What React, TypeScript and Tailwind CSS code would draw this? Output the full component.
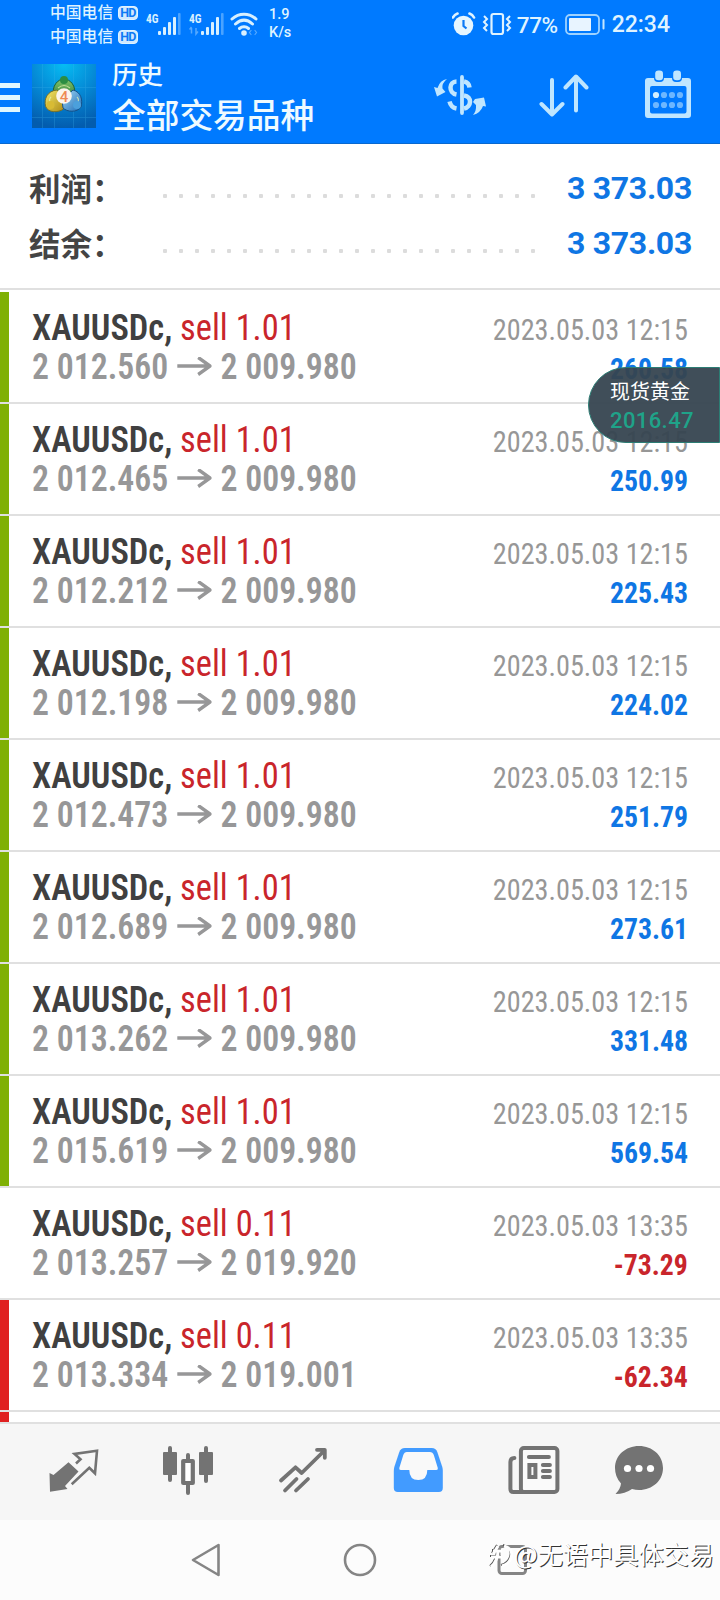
import type { ReactNode } from "react";

type Deal = {
  volume: string;
  open: string;
  close: string;
  time: string;
  profit: string;
  mark: "green" | "red" | "none";
};

const deals: Deal[] = [
  { volume: "1.01", open: "2 012.560", close: "2 009.980", time: "2023.05.03 12:15", profit: "260.58", mark: "green" },
  { volume: "1.01", open: "2 012.465", close: "2 009.980", time: "2023.05.03 12:15", profit: "250.99", mark: "green" },
  { volume: "1.01", open: "2 012.212", close: "2 009.980", time: "2023.05.03 12:15", profit: "225.43", mark: "green" },
  { volume: "1.01", open: "2 012.198", close: "2 009.980", time: "2023.05.03 12:15", profit: "224.02", mark: "green" },
  { volume: "1.01", open: "2 012.473", close: "2 009.980", time: "2023.05.03 12:15", profit: "251.79", mark: "green" },
  { volume: "1.01", open: "2 012.689", close: "2 009.980", time: "2023.05.03 12:15", profit: "273.61", mark: "green" },
  { volume: "1.01", open: "2 013.262", close: "2 009.980", time: "2023.05.03 12:15", profit: "331.48", mark: "green" },
  { volume: "1.01", open: "2 015.619", close: "2 009.980", time: "2023.05.03 12:15", profit: "569.54", mark: "green" },
  { volume: "0.11", open: "2 013.257", close: "2 019.920", time: "2023.05.03 13:35", profit: "-73.29", mark: "none" },
  { volume: "0.11", open: "2 013.334", close: "2 019.001", time: "2023.05.03 13:35", profit: "-62.34", mark: "red" },
];

const markColor = { green: "bg-[#7fb004]", red: "bg-[#e02020]", none: "bg-white" };

function SignalBars({ arrows }: { arrows?: boolean }) {
  return (
    <svg className="h-[26px] w-[37px]" viewBox="0 0 37 26" fill="#d8f0ff">
      <text x="0" y="13" fontSize="13" fontWeight="700" fontFamily="Roboto Condensed, Roboto, sans-serif" textLength="12.5" lengthAdjust="spacingAndGlyphs">4G</text>
      <rect x="12" y="21" width="3" height="4" rx="1" />
      <rect x="17" y="17" width="3" height="8" rx="1" />
      <rect x="22" y="12" width="3" height="13" rx="1" />
      <rect x="27" y="7" width="3" height="18" rx="1" />
      <rect x="32" y="3" width="2.6" height="22" rx="1" opacity="0.35" />
      {arrows && <path d="M2.5 18v5.5M2.5 17l-2 2.5M7 18v6l2-2.5" stroke="#d8f0ff" strokeWidth="1.5" fill="none" opacity="0.4" />}
    </svg>
  );
}

function StatusBar() {
  return (
    <div className="flex h-12 items-start text-[#dff3ff]">
      <div className="flex w-[95px] flex-col pl-[50px] font-['Noto_Sans_CJK_SC',sans-serif] text-[15.8px] leading-6 font-medium text-nowrap">
        <span>中国电信</span>
        <span>中国电信</span>
      </div>
      <div className="ml-[23px] flex flex-col gap-[10px] pt-[6px]">
        {[0, 1].map((i) => (
          <span key={i} className="flex h-[14px] w-[20px] items-center justify-center rounded-[4px] border border-[#dff3ff] bg-[#cfe8ff] font-['Roboto',sans-serif] text-[12.500px] leading-[12px] font-bold tracking-[-0.6px] text-[#0d7af5]">HD</span>
        ))}
      </div>
      <div className="ml-[8px] flex gap-[6px] pt-[10px]">
        <SignalBars />
        <SignalBars arrows />
      </div>
      <svg className="mt-[11px] ml-[4px] h-[26px] w-[28px]" viewBox="0 0 28 26" fill="none" stroke="#d8f0ff" strokeWidth="3" strokeLinecap="round">
        <path d="M2 8C9 1.500 19 1.500 26 8M5.500 13C11 8 17 8 22.500 13M9.500 17.500C12 15.300 16 15.300 18.500 17.500" />
        <circle cx="14" cy="22" r="1.300" fill="#d8f0ff" />
        <path d="M21 19.500l-1.500 2 1.500 2M25 19.500l1.500 2-1.500 2" strokeWidth="1.200" opacity="0.4" />
      </svg>
      <div className="ml-[11px] flex flex-col pt-[6px] font-['Roboto',sans-serif] text-[14.5px] leading-[18px] font-medium">
        <span>1.9</span>
        <span>K/s</span>
      </div>
      <svg className="mt-[12px] ml-auto h-[24px] w-[60px]" viewBox="452 12 60 24" fill="none" stroke="#dff3ff">
        <circle cx="463.500" cy="25.500" r="9.800" fill="#e6f6ff" stroke="none" />
        <path d="M463.500 20v6l3 2.500" stroke="#0d7af5" strokeWidth="2.200" />
        <path d="M453 17.500Q454.500 14.500 457.500 13.500M469.500 13.500Q472.500 14.500 474 17.500" strokeWidth="2.600" strokeLinecap="round" />
        <rect x="491.500" y="14" width="11.500" height="20" rx="2" strokeWidth="2.200" />
        <path d="M484 16l3 3-3 3 3 3-3 3 3 3M510 16l-3 3 3 3-3 3 3 3-3 3" strokeWidth="2" />
      </svg>
      <span className="mt-[12px] ml-[5px] w-[43px] font-['Roboto',sans-serif] text-[22.500px] leading-[26px] font-medium tracking-[-0.3px] text-nowrap">77%</span>
      <svg className="mt-[13px] ml-[5px] h-[22px] w-[41px]" viewBox="0 0 41 22">
        <rect x="1" y="2" width="33" height="19" rx="4" fill="none" stroke="#9ed2ff" strokeWidth="1.800" />
        <rect x="4" y="5" width="22" height="13" rx="1" fill="#e8f4ff" />
        <path d="M38.500 7v8.500" stroke="#c4e6ff" strokeWidth="2" strokeLinecap="round" />
      </svg>
      <span className="mt-[12px] mr-[50px] ml-[6px] font-['Roboto',sans-serif] text-[23px] leading-[26px] font-medium">22:34</span>
    </div>
  );
}

function AppLogo() {
  return (
    <svg className="h-16 w-16" viewBox="0 0 64 64">
      <defs>
        <radialGradient id="sky" cx="0.5" cy="0" r="1">
          <stop offset="0" stopColor="#06bdf3" />
          <stop offset="0.5" stopColor="#058ad6" />
          <stop offset="1" stopColor="#035cae" />
        </radialGradient>
        <linearGradient id="leaf" x2="0" y2="1">
          <stop stopColor="#86c66b" />
          <stop offset="1" stopColor="#217434" />
        </linearGradient>
        <linearGradient id="gold" x2="1" y2="1">
          <stop stopColor="#f3e86a" />
          <stop offset="1" stopColor="#ad8a14" />
        </linearGradient>
        <linearGradient id="water" x2="1" y2="1">
          <stop stopColor="#a6dcf5" />
          <stop offset="1" stopColor="#1b6ab8" />
        </linearGradient>
      </defs>
      <rect width="64" height="64" fill="url(#sky)" />
      <path d="M0 23.500h64M0 53.500h64M10.500 0v64M22.500 0v64M41.500 0v64M53.500 0v64" stroke="#42b6ee" strokeWidth="0.700" opacity="0.35" />
      <path d="M22 32C19 22 26 15 32 15s13 7 10 17l-4 4H26Z" fill="url(#leaf)" stroke="#1b5f35" />
      <path d="M25 26C15 27 12 35 13.500 42c2 7 13 7 18 3l1-11Z" fill="url(#gold)" stroke="#75702a" />
      <path d="M41 26c8 2 10 10 8 17-4 6-14 5-18 1l-1-8Z" fill="url(#water)" stroke="#155188" />
      <path d="M26 24q6-5 12 0M19 33q-3 3 0 6M45 33q3 3 0 6" fill="none" stroke="#e6f5b0" strokeWidth="1.200" opacity="0.7" />
      <circle cx="32" cy="16" r="4" fill="#2c8d43" />
      <circle cx="18.500" cy="41" r="4" fill="#d8bb34" />
      <circle cx="45" cy="41" r="4" fill="#4ba0dc" />
      <circle cx="32" cy="32" r="7.800" fill="#fbf4ec" />
      <text x="32" y="37.500" textAnchor="middle" fontSize="15" fontWeight="500" fontFamily="Roboto, sans-serif" fill="#ee8a54">4</text>
    </svg>
  );
}

function Header() {
  return (
    <div className="flex h-24 items-start border-b border-[#0868cf]">
      <div className="flex w-5 flex-col gap-[7px] pt-[35px]">
        <span className="h-[5px] bg-[#dff6ff]" />
        <span className="h-[5px] bg-[#dff6ff]" />
        <span className="h-[5px] bg-[#dff6ff]" />
      </div>
      <div className="mt-4 ml-3">
        <AppLogo />
      </div>
      <div className="ml-[16px] flex flex-col pt-[7px] font-['Noto_Sans_CJK_SC',sans-serif] font-medium text-[#eefaff]">
        <span className="text-[25.500px] leading-[36px]">历史</span>
        <span className="text-[33.700px] leading-[45px]">全部交易品种</span>
      </div>
      <svg className="mt-6 ml-auto h-12 w-[56px]" viewBox="432 72 56 48" fill="none" stroke="#c0e6ff" strokeWidth="3.800">
        <path d="M462 77v36" strokeLinecap="round" />
        <path d="M456.500 81.500C449 81.500 448 93 456.500 94.500M464 81.500Q469 82.500 469.500 87.500M464 95.500C472.500 96.500 471.500 107 464 108.500M449.500 101.500Q451 107.500 456.500 108.500" strokeWidth="4.500" />
        <path d="M447 79q-5.500 4.500-4.500 9.500l3 3.500-8.500 4.500-3-9.500 3.500 1Q440 80 447 79ZM473 115q3.500-4 3-10l-3-3 2-3 9-1.500 2 9-3-.5Q480.500 113 473 115Z" fill="#c0e6ff" stroke="none" />
      </svg>
      <svg className="mt-6 ml-[51px] h-12 w-[52px]" viewBox="539 72 52 48" fill="none" stroke="#bfe6ff" strokeWidth="4" strokeLinecap="round" strokeLinejoin="round">
        <path d="M552 80v34M541.500 104l10.500 10.500 10.500-10.500M576 110.500V77M565.500 87.500L576 76.500l10.500 11" />
      </svg>
      <svg className="mt-5 mr-7 ml-[53px] h-[52px] w-12" viewBox="644 68 48 52">
        <path fillRule="evenodd" d="M648 78h40q3 0 3 3v34q0 3-3 3h-40q-3 0-3-3V81q0-3 3-3Zm4 8q-2 0-2 2v23.500q0 2 2 2h32.500q2 0 2-2V88q0-2-2-2Z" fill="#c0e6ff" />
        <rect x="654" y="70" width="10" height="12" rx="4" fill="#007aff" />
        <rect x="672" y="70" width="10" height="12" rx="4" fill="#007aff" />
        <rect x="655.200" y="70.500" width="7.800" height="9.800" rx="3.300" fill="#c0e6ff" />
        <rect x="673.200" y="70.500" width="7.800" height="9.800" rx="3.300" fill="#c0e6ff" />
        <g fill="#6db7ff">
          <circle cx="656" cy="95" r="3.100" fill="#d4f0ff" />
          <circle cx="664" cy="95" r="3.100" />
          <circle cx="672" cy="95" r="3.100" />
          <circle cx="680" cy="95" r="3.100" />
          <circle cx="656" cy="105" r="3.100" />
          <circle cx="664" cy="105" r="3.100" />
          <circle cx="672" cy="105" r="3.100" />
          <circle cx="680" cy="105" r="3.100" />
        </g>
      </svg>
    </div>
  );
}

function SummaryLine({ label, value }: { label: string; value: string }) {
  return (
    <div className="flex h-[55px] items-center">
      <span className="-mt-[3px] w-[134px] font-['Noto_Sans_CJK_SC',sans-serif] text-[31.500px] leading-[55px] font-bold text-[#444]">{label}</span>
      <div className="mt-[14px] flex gap-3">
        {Array.from({ length: 24 }, (_, i) => (
          <span key={i} className="size-1 rounded-[1px] bg-[#dcdcdc]" />
        ))}
      </div>
      <span className="ml-auto font-['Roboto',sans-serif] text-[32px] leading-[55px] font-bold tracking-[-0.3px] text-[#0f76e4]">{value}</span>
    </div>
  );
}

function DealRow({ deal }: { deal: Deal }) {
  return (
    <div className="flex h-28 border-b-2 border-[#e0e0e0]">
      <div className={`w-[9px] ${markColor[deal.mark]}`} />
      <div className="flex grow justify-between pr-[32px] pl-[23px] font-['Roboto_Condensed','Roboto',sans-serif] text-nowrap">
        <div className="flex flex-col items-start pt-4 text-[37px] leading-[39px]">
          <div className="origin-left scale-x-[0.93] text-[#c9252b]">
            <span className="font-semibold text-[#404040]">XAUUSDc,</span> sell {deal.volume}
          </div>
          <div className="flex origin-left scale-x-[0.913] items-center font-semibold text-[#979798]">
            {deal.open}
            <svg className="mx-[9.500px] h-5 w-[38px]" viewBox="0 0 38 20" fill="none" stroke="#979798" strokeWidth="3.600">
              <path d="M0 9h36M23 .5L36 9 23 17.500" strokeLinejoin="round" />
            </svg>
            {deal.close}
          </div>
        </div>
        <div className="flex flex-col items-end pt-[19px] text-[29.500px] leading-[39px]">
          <span className="origin-right scale-x-[0.957] text-[#979797]">{deal.time}</span>
          <span className={`origin-right scale-x-[0.94] font-bold ${deal.profit.startsWith("-") ? "text-[#c9252b]" : "text-[#0f76e4]"}`}>{deal.profit}</span>
        </div>
      </div>
    </div>
  );
}

function Tab({ box, children }: { box: string; children: ReactNode }) {
  return (
    <svg className="h-14 w-[56px] overflow-visible" viewBox={box} fill="none" stroke="#737373" strokeLinecap="round" strokeLinejoin="round">
      {children}
    </svg>
  );
}

function TabBar() {
  return (
    <div className="flex h-24 items-center justify-between bg-[#f6f6f6] px-[46px] pb-1">
      <Tab box="46 1442 56 56">
        <path d="M49.500 1473l4 2 15-12.700 10 9.200L65 1486l2.500 3-17.500 2.700Z" fill="#737373" stroke="none" />
        <path d="M76 1463.500l4.500-4.200-6-5.300 22.500-3.300-2 22.600-5.700-5.600-17.600 16.600" strokeWidth="2.600" strokeLinejoin="miter" strokeLinecap="butt" />
      </Tab>
      <Tab box="160.500 1442 56 56">
        <path d="M170.500 1448v32M206.500 1448v33M188.500 1455v6M188.500 1484v9" strokeWidth="4" />
        <rect x="163.500" y="1452" width="14" height="23" rx="1" fill="#737373" stroke="none" />
        <rect x="199.500" y="1452" width="14" height="23" rx="1" fill="#737373" stroke="none" />
        <rect x="183.700" y="1461" width="9.600" height="22" strokeWidth="4.200" fill="#fff" />
      </Tab>
      <Tab box="275 1442 56 56">
        <path d="M281 1480.500l14.500-13.200 6.200 5.700 22.800-22.500M317 1449.800h7.800v8M285 1490.500l11.500-11.500M296 1490.500l12-11.500" strokeWidth="3.800" />
      </Tab>
      <Tab box="389.200 1442 56 56">
        <path d="M405 1448h27q4 0 5.500 4l5 15q.5 2 .5 4v17q0 4-4 4h-41q-4 0-4-4v-17q0-2 .5-4l5-15q1.500-4 5.500-4Z" fill="#429bff" stroke="none" />
        <path d="M407 1452h23q3 0 4 3l4 13q.5 2-1.500 2H427.500q0 10-9 10t-9-10H401q-2 0-1.500-2l4-13q1-3 3.500-3Z" fill="#f9f9f9" stroke="none" />
      </Tab>
      <Tab box="503.600 1442 56 56">
        <rect x="520.500" y="1448" width="36.500" height="44" rx="3" strokeWidth="4" fill="#fafafa" />
        <path d="M514 1458q-4 0-4 4v27q0 3 3 3h10M528.500 1457h20M542.500 1465h7M542.500 1471h7M542.500 1477h7" strokeWidth="4" />
        <rect x="529" y="1465" width="6" height="12" strokeWidth="4" strokeLinejoin="miter" />
      </Tab>
      <Tab box="618 1442 56 56">
        <path d="M639 1446c13.500 0 24 9.500 24 22s-10.500 22-24 22q-3.500 0-7-1-7 5-16.500 5 5-5 5.500-10.500-6-6.500-6-15.500c0-12.500 10.500-22 24-22Z" fill="#737373" stroke="none" />
        <g fill="#fff" stroke="none">
          <circle cx="627.500" cy="1468.500" r="3.600" />
          <circle cx="639" cy="1468.500" r="3.600" />
          <circle cx="650.500" cy="1468.500" r="3.600" />
        </g>
      </Tab>
    </div>
  );
}

function SystemNav() {
  return (
    <div className="flex h-20 items-center bg-[#fcfcfc] pl-[188px]">
      <svg className="h-10 w-9" viewBox="188 1540 36 40" fill="none" stroke="#858585" strokeWidth="2.600" strokeLinejoin="round">
        <path d="M193 1560l25.500-15v30Z" />
      </svg>
      <svg className="ml-[118px] h-10 w-9" viewBox="342 1540 36 40" fill="none" stroke="#858585" strokeWidth="2.600">
        <circle cx="360" cy="1560" r="15" />
      </svg>
      <svg className="ml-[116px] h-10 w-9" viewBox="494 1540 36 40" fill="none" stroke="#858585" strokeWidth="3">
        <rect x="499" y="1546.500" width="26.500" height="27" rx="3" />
      </svg>
    </div>
  );
}

function Watermark() {
  return (
    <div className="absolute right-[6px] bottom-[29px] flex items-center text-white">
      <svg className="mt-1 h-7 w-[28px]" viewBox="488 1542 28 28" fill="none">
        <path d="M499 1546l-5 8M494 1551h9M492 1557h11M499 1550q0 11-7 17M505 1546q10 3 7 12-2 6-9 8" stroke="#555" strokeWidth="2" />
        <path d="M500 1547l-5 8M495 1552h9M493 1558h11M500 1551q0 11-7 17M506 1547q10 3 7 12-2 6-9 8" stroke="#fff" strokeWidth="3" />
      </svg>
      <span className="font-['Noto_Sans_CJK_SC',sans-serif] text-[25.200px] leading-[36px] text-nowrap [text-shadow:1px_1px_0_#333]">@无语中具体交易</span>
    </div>
  );
}

export default function App() {
  return (
    <div className="relative flex h-[1600px] w-[720px] flex-col overflow-hidden bg-white">
      <div className="bg-[#007aff]">
        <StatusBar />
        <Header />
      </div>
      <div className="flex h-[146px] flex-col border-b-2 border-[#e0e0e0] pt-[17px] pr-[28px] pl-[29px]">
        <SummaryLine label="利润：" value="3 373.03" />
        <SummaryLine label="结余：" value="3 373.03" />
      </div>
      <div className="flex h-[1134px] flex-col overflow-hidden border-b-2 border-[#e0e0e0] pt-[2px]">
        {deals.map((deal, i) => (
          <DealRow key={i} deal={deal} />
        ))}
        <div className="h-[10px] w-[9px] bg-[#e02020]" />
      </div>
      <TabBar />
      <SystemNav />
      <div className="absolute top-[367px] right-0 flex h-[76px] w-[132px] flex-col rounded-l-full border border-[#2c7d74] bg-[#364450]/95 pt-[10px] pl-[21px]">
        <span className="font-['Noto_Sans_CJK_SC',sans-serif] text-[20px] leading-[26px] text-white">现货黄金</span>
        <span className="font-['Roboto',sans-serif] text-[22px] leading-[33px] font-medium tracking-[0.4px] text-[#1fa389]">2016.47</span>
      </div>
      <Watermark />
    </div>
  );
}
